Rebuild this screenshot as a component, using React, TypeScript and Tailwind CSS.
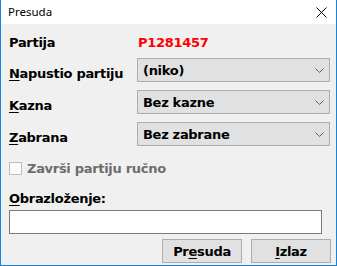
import React from 'react';

// Small down chevron used by the combo boxes
function Chevron() {
  return (
    <svg width="9" height="5" viewBox="0 0 9 5" className="shrink-0">
      <path d="M0.5 0.5 L4.5 4.5 L8.5 0.5" fill="none" stroke="#606060" strokeWidth="1" />
    </svg>
  );
}

function Combo({ value }: { value: string }) {
  return (
    <div className="w-[193px] h-[24px] flex items-center justify-between pl-[5px] pr-[5px] bg-[#e1e1e1] border border-[#adadad]">
      <span className="text-black">{value}</span>
      <Chevron />
    </div>
  );
}

function Row({ label, children }: { label: React.ReactNode; children: React.ReactNode }) {
  return (
    <div className="flex items-center h-[24px]">
      <div className="w-[128px] relative top-[3px]">{label}</div>
      {children}
    </div>
  );
}

export default function App() {
  return (
    <div className="w-[337px] h-[266px] flex flex-col border-x border-b border-[#1883d7] bg-[#f0f0f0] font-['DejaVu_Sans',sans-serif] text-[13px] tracking-[-0.3px] font-bold text-black leading-none">
      {/* Title bar */}
      <div className="h-[24px] shrink-0 bg-white flex items-center justify-between pl-[7px] pr-[9px]">
        <span className="font-['Noto_Sans',sans-serif] font-normal text-[11.5px] tracking-normal text-black">Presuda</span>
        <svg width="11" height="11" viewBox="0 0 11 11">
          <path d="M0.5 0.5 L10.5 10.5 M10.5 0.5 L0.5 10.5" stroke="#000" strokeWidth="1" />
        </svg>
      </div>

      <div className="flex-1 flex flex-col pl-[8px]">
        <div className="flex items-center h-[24px] mt-[6px]">
          <div className="w-[128px]">Partija</div>
          <div className="text-[#ff0000] pl-[1px]">P1281457</div>
        </div>

        <div className="flex flex-col gap-[8px] mt-[4px]">
          <Row label={<><u className="underline-offset-[2px]">N</u>apustio partiju</>}>
            <Combo value="(niko)" />
          </Row>
          <Row label={<><u className="underline-offset-[2px]">K</u>azna</>}>
            <Combo value="Bez kazne" />
          </Row>
          <Row label={<><u className="underline-offset-[2px]">Z</u>abrana</>}>
            <Combo value="Bez zabrane" />
          </Row>
        </div>

        <div className="flex items-center h-[13px] mt-[16px]">
          <div className="w-[13px] h-[13px] border border-[#bcbcbc] bg-[#fcfcfc]" />
          <span className="ml-[5px] text-[#6d6d6d]">Završi partiju ručno</span>
        </div>

        <div className="h-[16px] mt-[15px] flex items-center">
          <span><u className="underline-offset-[2px]">O</u>brazloženje:</span>
        </div>

        <div className="w-[313px] h-[24px] mt-[4px] bg-white border border-[#7a7a7a]" />

        <div className="flex justify-end gap-[9px] mt-[5px] pr-[5px]">
          <button className="w-[80px] h-[24px] bg-[#e1e1e1] border border-[#adadad] font-bold flex items-center justify-center">
            <span>Pr<u className="underline-offset-[2px]">e</u>suda</span>
          </button>
          <button className="w-[80px] h-[24px] bg-[#e1e1e1] border border-[#adadad] font-bold flex items-center justify-center">
            <span><u className="underline-offset-[2px]">I</u>zlaz</span>
          </button>
        </div>
      </div>
    </div>
  );
}
